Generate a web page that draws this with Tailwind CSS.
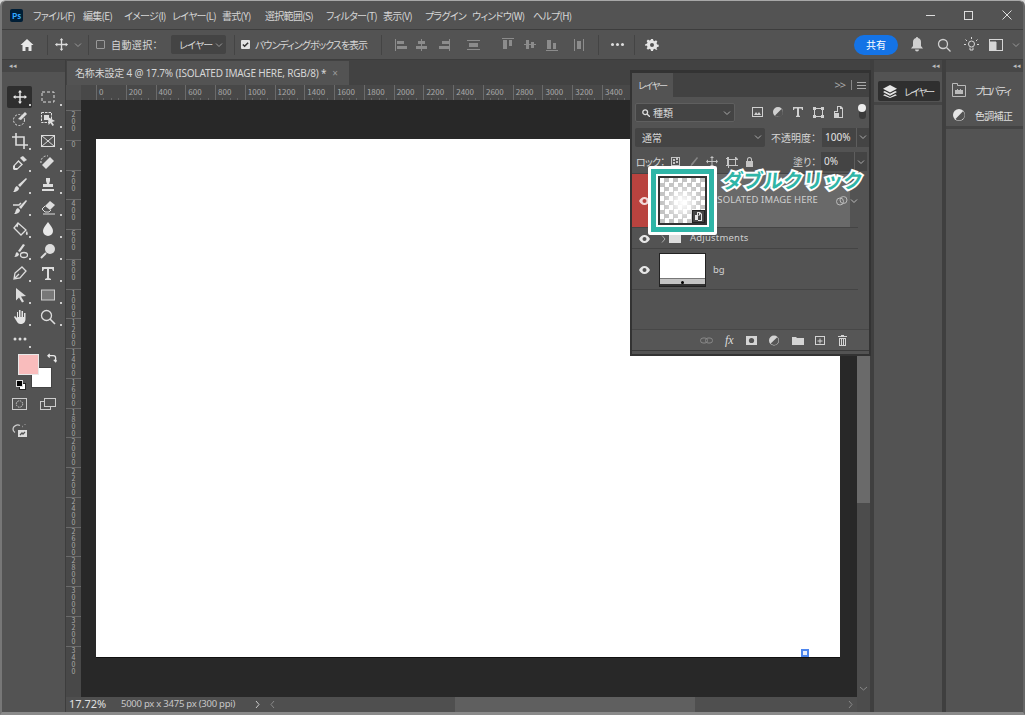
<!DOCTYPE html>
<html lang="ja">
<head>
<meta charset="UTF-8">
<title>Photoshop</title>
<script src="https://cdn.jsdelivr.net/npm/@tailwindcss/browser@4"></script>
</head>
<body class="bg-[#d8d8d8] font-['Noto_Sans_CJK_JP','Noto_Sans',sans-serif] [font-feature-settings:'palt'] whitespace-nowrap text-[#d6d6d6]">
<div class="relative w-[1025px] h-[715px] overflow-hidden rounded-t-[6px] bg-[#535353] border-l-2 border-r-2 border-b-[3px] border-t border-l-[#777] border-r-[#666] border-b-[#8a8a8a] border-t-[#a8a8a8] flex flex-col">

  <!-- title bar -->
  <header class="h-[28px] shrink-0 flex items-center text-[10px]">
    <div class="ml-[8px] w-[13px] h-[13px] rounded-[2px] bg-[#001e36] text-[#31a8ff] text-[8px] leading-[13px] text-center font-bold">Ps</div>
    <nav class="ml-[10px] flex tracking-[-0.7px]">
      <span class="w-[50px]">ファイル(F)</span>
      <span class="w-[41px]">編集(E)</span>
      <span class="w-[48px]">イメージ(I)</span>
      <span class="w-[50px]">レイヤー(L)</span>
      <span class="w-[43px]">書式(Y)</span>
      <span class="w-[61px]">選択範囲(S)</span>
      <span class="w-[57px]">フィルター(T)</span>
      <span class="w-[42px]">表示(V)</span>
      <span class="w-[47px]">プラグイン</span>
      <span class="w-[61px]">ウィンドウ(W)</span>
      <span class="w-[50px]">ヘルプ(H)</span>
    </nav>
    <div class="ml-auto flex items-center mr-[8px]">
      <div class="w-[9px] h-px bg-[#ddd] mr-[29px]"></div>
      <div class="w-[9px] h-[9px] border border-[#ddd] mr-[29px]"></div>
      <svg class="w-[10px] h-[10px] mr-[3px]" viewBox="0 0 10 10" stroke="#ddd" fill="none"><path d="M.5.5l9 9M9.5.5l-9 9"/></svg>
    </div>
  </header>

  <!-- options bar -->
  <div class="h-[31px] shrink-0 flex items-center border-y border-[#3d3d3d] text-[10px]">
    <svg class="ml-[18px] w-[14px] h-[14px]" viewBox="0 0 14 14" fill="#e8e8e8"><path d="M7 1L.5 7H2.500v6h3V9h3v4h3V7h2z"/></svg>
    <div class="ml-[13px] w-px h-[20px] bg-[#444]"></div>
    <svg class="ml-[6px] w-[15px] h-[15px]" viewBox="0 0 16 16" fill="#dcdcdc"><path d="M8 1l2 2.500H8.700v3.800h3.800V6L15 8l-2.500 2V8.700H8.700v3.800H10L8 15l-2-2.500h1.300V8.700H3.500V10L1 8l2.500-2v1.300h3.800V3.500H6z"/></svg>
    <svg class="ml-[5px] w-[8px] h-[8px]" viewBox="0 0 8 8" stroke="#999" fill="none"><path d="M1 2.500l3 3 3-3"/></svg>
    <div class="ml-[6px] w-px h-[20px] bg-[#444]"></div>
    <div class="ml-[7px] w-[9px] h-[9px] border border-[#999] rounded-[1px]"></div>
    <span class="ml-[6px] w-[60px] tracking-[0.4px]">自動選択：</span>
    <div class="w-[55px] h-[19px] bg-[#444] rounded-[2px] flex items-center pl-[8px] tracking-[-0.8px]">レイヤー<svg class="ml-auto mr-[3px] w-[8px] h-[8px]" viewBox="0 0 8 8" stroke="#999" fill="none"><path d="M1 2.500l3 3 3-3"/></svg></div>
    <div class="ml-[8px] w-px h-[20px] bg-[#444]"></div>
    <div class="ml-[6px] w-[9px] h-[9px] bg-[#e2e2e2] rounded-[1px] flex items-center justify-center"><svg class="w-[7px] h-[7px]" viewBox="0 0 8 8" stroke="#333" stroke-width="1.800" fill="none"><path d="M1 4l2 2 4-4"/></svg></div>
    <span class="ml-[5px] w-[126px] tracking-[-1px]">バウンディングボックスを表示</span>
    <div class="w-px h-[20px] bg-[#444]"></div>
    <svg class="ml-[13px] w-[190px] h-[14px]" viewBox="0 0 190 14" fill="#8c8c8c">
      <path d="M0 1h1v12H0zM2 3h7v3H2zM2 8h10v3H2z"/>
      <path d="M26 1h1v12h-1zM23 3h7v3h-7zM21 8h11v3H21z"/>
      <path d="M54 1h1v12h-1zM47 3h7v3h-7zM44 8h10v3H44z"/>
      <path d="M72 2h13v1H72zM72 11h13v1H72zM74 5h9v4h-9z"/>
      <g transform="translate(-6 0)">
        <path d="M113 0h12v1h-12zM114 2h4v9h-4zM120 2h3v6h-3z"/>
        <path d="M135 6h12v1h-12zM137 2h3v9h-3zM142 4h3v6h-3z"/>
        <path d="M157 12h12v1h-12zM158 2h4v9h-4zM164 5h3v6h-3z"/>
        <path d="M185 1h1v12h-1zM194 1h1v12h-1zM188 3h4v8h-4z"/>
      </g>
    </svg>
    <div class="ml-[13px] w-px h-[20px] bg-[#444]"></div>
    <div class="ml-[12px] flex gap-[2px]"><i class="w-[3px] h-[3px] rounded-full bg-[#ddd]"></i><i class="w-[3px] h-[3px] rounded-full bg-[#ddd]"></i><i class="w-[3px] h-[3px] rounded-full bg-[#ddd]"></i></div>
    <div class="ml-[10px] w-px h-[20px] bg-[#444]"></div>
    <svg class="ml-[10px] w-[14px] h-[14px]" viewBox="0 0 14 14" fill="#e4e4e4"><path fill-rule="evenodd" d="M6 1h2l.3 1.600 1.300.6L11 2.300l1.400 1.400-.9 1.400.6 1.300 1.600.3v2l-1.600.3-.6 1.300.9 1.400L11 11.700l-1.400-.9-1.300.6L8 13H6l-.3-1.600-1.300-.6-1.400.9-1.400-1.400.9-1.400-.6-1.300L.3 8V6l1.600-.3.6-1.300-.9-1.400L3 1.600l1.400.9 1.300-.6zM7 5a2 2 0 100 4 2 2 0 000-4z"/></svg>
    <div class="ml-[195px] w-[44px] h-[20px] rounded-full bg-[#1473e6] text-white text-center leading-[19px]">共有</div>
    <svg class="ml-[12px] w-[14px] h-[15px]" viewBox="0 0 14 15" fill="#cfcfcf"><path d="M7 0c.7 0 1 .5 1 1 2 .5 3 2 3 4v4l2 2.500H1L3 9V5c0-2 1-3.500 3-4 0-.5.3-1 1-1zM5 12.500h4a2 2 0 01-4 0z"/></svg>
    <svg class="ml-[13px] w-[14px] h-[14px]" viewBox="0 0 14 14" fill="none" stroke="#cfcfcf" stroke-width="1.300"><circle cx="6" cy="6" r="4.500"/><path d="M9.500 9.500L13.500 13.500"/></svg>
    <svg class="ml-[13px] w-[15px] h-[15px]" viewBox="0 0 15 15" fill="none" stroke="#d6d6d6"><circle cx="7.500" cy="7" r="3"/><path d="M6 10.500v2.500h3v-2.500M7.500 0v2M1.500 2.500L3 4M13.500 2.500L12 4M0 7.500h2M13 7.500h2"/></svg>
    <svg class="ml-[10px] w-[14px] h-[12px]" viewBox="0 0 14 12" fill="none" stroke="#d6d6d6"><rect x=".5" y=".5" width="13" height="11"/><path fill="#d6d6d6" d="M1 3h6v8H1z"/></svg>
    <svg class="ml-[9px] w-[8px] h-[8px]" viewBox="0 0 8 8" stroke="#999" fill="none"><path d="M1 2.500l3 3 3-3"/></svg>
  </div>

  <!-- workspace -->
  <div class="flex-1 min-h-0 flex">
    <!-- tools -->
    <aside class="w-[64px] shrink-0 flex flex-col border-r border-[#3d3d3d]">
      <div class="h-[12px] bg-[#474747] text-[7px] leading-[11px] pl-[7px] text-[#bbb]">◂◂</div>
      <div class="h-[14px]"></div>
      <div id="tools" class="pl-[5px] grid grid-cols-[25px_31px] auto-rows-[22px]"></div>
      <div class="relative h-[42px]">
        <div class="absolute left-[29px] top-[17px] w-[21px] h-[21px] bg-white border border-[#444]"></div>
        <div class="absolute left-[16px] top-[4px] w-[21px] h-[21px] bg-[#f9bcbc] border border-[#e8e8e8]"></div>
        <svg class="absolute left-[45px] top-[3px] w-[10px] h-[10px]" viewBox="0 0 11 11" fill="none" stroke="#e8e8e8" stroke-width="1.400"><path d="M1 3h6a2.500 2.500 0 012.500 2.500V9M3 1L1 3l2 2M7.500 7.500l2 2 1-1.500"/></svg>
        <div class="absolute left-[17px] top-[33px] w-[7px] h-[7px] bg-white border border-[#222]"></div>
        <div class="absolute left-[14px] top-[30px] w-[7px] h-[7px] bg-black border border-[#ddd]"></div>
      </div>
      <div class="pl-[5px] flex h-[24px] items-center">
        <div class="w-[25px] flex justify-center"><svg class="w-[15px] h-[12px]" viewBox="0 0 15 12" fill="none" stroke="#ccc"><rect x=".5" y=".5" width="14" height="11"/><circle cx="7.500" cy="6" r="3.200" stroke-dasharray="1.500 1"/></svg></div>
        <div class="w-[31px] flex justify-center"><svg class="w-[16px] h-[12px]" viewBox="0 0 16 12" fill="none" stroke="#ccc"><rect x=".5" y="3.500" width="10" height="8"/><rect x="4.500" y=".5" width="11" height="8" fill="#535353"/></svg></div>
      </div>
      <div class="pl-[5px] flex h-[28px] items-center">
        <div class="w-[25px] flex justify-center"><svg class="w-[15px] h-[14px]" viewBox="0 0 15 14" fill="none" stroke="#ccc" stroke-width="1.300"><path d="M8 2.500C5 1 1 3 1 6c0 1.500 1 3 2 3.500M13 1v.5M10.500 3.500h.5"/><path fill="#ddd" stroke="none" d="M6 7h9v7H6z"/><path stroke="#535353" d="M8 12l2-2 1 1 2-2"/></svg></div>
      </div>
    </aside>

    <!-- document -->
    <main class="relative flex-1 min-w-0 flex flex-col">
      <div class="h-[25px] shrink-0 bg-[#424242] flex items-end">
        <div class="ml-[1px] w-[282px] h-[24px] bg-[#535353] flex items-center pl-[8px] text-[10px] tracking-[-0.18px] font-['Noto_Sans','Noto_Sans_CJK_JP',sans-serif]">名称未設定 4 @ 17.7% (ISOLATED IMAGE HERE, RGB/8) *<span class="ml-[6px] text-[#999]">×</span></div>
      </div>
      <div class="flex-1 min-h-0 flex">
        <div class="flex-1 min-w-0 flex flex-col">
          <div class="flex-1 min-h-0 flex flex-col">
            <div class="h-[15px] shrink-0 flex bg-[#484848]">
              <div class="w-[15px] shrink-0 bg-[#505050]"></div>
              <div id="rulerH" class="flex-1 min-w-0 flex overflow-hidden ml-[15px] text-[8px] leading-[14px] text-[#a8a8a8] bg-[repeating-linear-gradient(90deg,#666_0_1px,transparent_1px_7.44px)] bg-size-[100%_2px] bg-bottom bg-no-repeat"></div>
            </div>
            <div class="flex-1 min-h-0 flex">
              <div id="rulerV" class="w-[15px] shrink-0 overflow-hidden bg-[#484848] pt-[10px] text-[7px] leading-[7px] text-[#a8a8a8]"></div>
              <div class="relative flex-1 min-w-0 bg-[#282828] pl-[15px] pt-[39px]">
                <div class="relative w-[744px] h-[518px] bg-white shadow-[0_1px_0_#111]">
                  <div class="absolute left-[705px] top-[510px] w-[8px] h-[8px] bg-[#e8eefc] border-2 border-[#4d86ee]"></div>
                </div>
              </div>
            </div>
          </div>
          <!-- status + horizontal scroll -->
          <div class="h-[15px] shrink-0 flex items-center bg-[#4f4f4f]">
            <span class="ml-[3px] w-[52px] shrink-0 text-[11px] text-[#e0e0e0] font-['Noto_Sans',sans-serif]">17.72%</span>
            <span class="w-[133px] shrink-0 text-[9.5px] tracking-[-0.25px] text-[#c8c8c8] font-['Noto_Sans',sans-serif]">5000 px x 3475 px (300 ppi)</span>
            <svg class="w-[7px] h-[9px]" viewBox="0 0 7 9" fill="none" stroke="#ccc"><path d="M2 1l3 3.500-3 3.500"/></svg>
            <svg class="ml-[8px] w-[7px] h-[9px]" viewBox="0 0 7 9" fill="none" stroke="#888"><path d="M5 1L2 4.500 5 8"/></svg>
            <div class="ml-[179px] w-[240px] h-full bg-[#5f5f5f]"></div>
            <svg class="ml-[152px] w-[7px] h-[9px]" viewBox="0 0 7 9" fill="none" stroke="#888"><path d="M2 1l3 3.500-3 3.500"/></svg>
          </div>
        </div>
        <!-- vertical scroll -->
        <div class="w-[13px] shrink-0 flex flex-col bg-[#4c4c4c] pt-[270px] pb-[20px] items-center">
          <div class="w-full h-[148px] bg-[#6a6a6a]"></div>
          <svg class="mt-auto w-[9px] h-[7px]" viewBox="0 0 9 7" fill="none" stroke="#888"><path d="M1 2l3.500 3L8 2"/></svg>
        </div>
      </div>
    </main>

    <!-- docks -->
    <div class="w-[4px] shrink-0 bg-[#3f3f3f]"></div>
    <section class="w-[68px] shrink-0 flex flex-col">
      <div class="h-[12px] bg-[#474747] text-[7px] leading-[11px] text-right pr-[2px] text-[#bbb]">◂◂</div>
      <div class="h-[33px] border-b-[3px] border-[#444] pt-[9px] pl-[4px]">
        <div class="w-[62px] h-[20px] rounded-[2px] bg-[#2f2f2f] flex items-center pl-[5px] text-[10px] tracking-[-1.8px] text-[#ddd]">
          <svg class="w-[14px] h-[13px] mr-[7px]" viewBox="0 0 14 13" fill="#e6e6e6"><path d="M7 0l7 3.700-7 3.700L0 3.700z"/><path d="M1.700 6L7 8.800 12.300 6 14 7 7 10.700 0 7zM1.700 9.300L7 12.100l5.300-2.800L14 10.300 7 13 0 10.300z" /></svg>レイヤー
        </div>
      </div>
    </section>
    <div class="w-[4px] shrink-0 bg-[#3f3f3f]"></div>
    <section class="w-[77px] shrink-0 flex flex-col">
      <div class="h-[12px] bg-[#474747] text-[7px] leading-[11px] text-right pr-[2px] text-[#bbb]">◂◂</div>
      <div class="h-[57px] border-b-[3px] border-[#444] pt-[10px] pl-[6px] text-[10px] text-[#ddd] flex flex-col gap-[9px]">
        <div class="flex items-center h-[16px] tracking-[-2px]"><svg class="w-[14px] h-[14px] mr-[9px]" viewBox="0 0 14 14" fill="none" stroke="#bbb"><path d="M.5 13.500V.5h5v2h8v11z"/><path fill="#bbb" stroke="none" d="M3 11V7h2V6h1v1h2V6h1v1h2v4z"/></svg>プロパティ</div>
        <div class="flex items-center h-[16px] tracking-[-0.7px]"><svg class="w-[14px] h-[14px] mr-[9px]" viewBox="0 0 14 14"><circle cx="7" cy="7" r="6" fill="#e4e4e4"/><path fill="#535353" d="M11 3.200a5 5 0 010 7.600 5 5 0 01-7.500.200z"/></svg>色調補正</div>
      </div>
    </section>

    <!-- floating layers panel -->
    <div class="absolute left-[628px] top-[69px] w-[241px] h-[286px] flex flex-col bg-[#535353] border-2 border-[#333] border-t-[3px] text-[10px]">
      <div class="h-[24px] shrink-0 bg-[#424242] flex items-center">
        <div class="w-[41px] h-full bg-[#535353] flex items-center pl-[6px] text-[9.5px] tracking-[-1.5px]">レイヤー</div>
        <span class="ml-auto text-[#aaa] text-[11px] tracking-[-1px] font-['Noto_Sans',sans-serif]">&gt;&gt;</span>
        <i class="ml-[6px] w-px h-[10px] bg-[#888]"></i>
        <svg class="ml-[5px] mr-[3px] w-[9px] h-[7px]" viewBox="0 0 9 7" fill="#aaa"><path d="M0 0h9v1H0zM0 3h9v1H0zM0 6h9v1H0z"/></svg>
      </div>
      <!-- filter -->
      <div class="mt-[6px] h-[19px] shrink-0 flex items-center pl-[3px]">
        <div class="w-[100px] h-[19px] bg-[#444] border border-[#5f5f5f] rounded-[2px] flex items-center pl-[6px]">
          <svg class="w-[8px] h-[8px] mr-[3px]" viewBox="0 0 8 8" fill="none" stroke="#ddd" stroke-width="1.300"><circle cx="3.200" cy="3.200" r="2.400"/><path d="M5 5l3 3"/></svg>種類
          <svg class="ml-auto mr-[3px] w-[8px] h-[8px]" viewBox="0 0 8 8" stroke="#aaa" fill="none"><path d="M1 2.500l3 3 3-3"/></svg>
        </div>
        <svg class="ml-[15px] w-[96px] h-[13px]" viewBox="0 0 96 13" fill="#d0d0d0">
          <path fill-rule="evenodd" d="M2 1h11v10H2zM3 2v8h9V2z"/><path d="M4 9l2-3 1.500 2L9 6l2 3z"/>
          <path fill-rule="evenodd" d="M28 1a5 5 0 110 10 5 5 0 010-10zm3.500 2L25 9.500a4 4 0 006.500-6.500z"/>
          <path d="M43 1h10v3h-1l-.5-1.500H49V9.500l1 .5v1h-4v-1l1-.5V2.500h-2.500L44 4h-1z"/>
          <path fill-rule="evenodd" d="M63 1h3v1h5V1h3v3h-1v5h1v3h-3v-1h-5v1h-3V9h1V4h-1zm2 3v5h1v1h5V9h1V4h-1V3h-5v1z"/>
          <path fill-rule="evenodd" d="M87 0h4l2 2v10h-9V5h3zm1 1v5h-3v5h7V3h-2V1z"/><path d="M85 7h4v4h-4z"/>
        </svg>
        <div class="relative ml-[13px] w-[7px] h-[12px] bg-[#3a3a3a] rounded-full"><i class="absolute left-[-1px] top-[-3px] w-[8px] h-[8px] rounded-full bg-[#eee]"></i></div>
      </div>
      <!-- blend mode -->
      <div class="mt-[5px] h-[20px] shrink-0 flex items-center pl-[3px]">
        <div class="w-[130px] h-[19px] bg-[#444] rounded-[2px] flex items-center pl-[7px]">通常
          <svg class="ml-auto mr-[3px] w-[8px] h-[8px]" viewBox="0 0 8 8" stroke="#aaa" fill="none"><path d="M1 2.500l3 3 3-3"/></svg>
        </div>
        <span class="ml-[6px] w-[51px]">不透明度：</span>
        <div class="w-[47px] h-[19px] bg-[#444] flex items-center pl-[3px] text-[#e4e4e4] font-['Noto_Sans',sans-serif]">100%
          <span class="ml-auto w-[13px] h-full border-l border-[#5e5e5e] flex items-center justify-center"><svg class="w-[8px] h-[8px]" viewBox="0 0 8 8" stroke="#aaa" fill="none"><path d="M1 2.500l3 3 3-3"/></svg></span>
        </div>
      </div>
      <!-- lock -->
      <div class="mt-[5px] h-[19px] shrink-0 flex items-center pl-[4px]">
        <span class="w-[35px] tracking-[-0.8px]">ロック：</span>
        <svg class="w-[84px] h-[12px]" viewBox="0 0 84 12" fill="#c4c4c4">
          <path fill-rule="evenodd" d="M0 1h9v9H0zM1 2v7h7V2z"/><path d="M2 3h2v2H2zM5 5h2v2H5zM2 6h2v2H2zM5 2h2v2H5z"/>
          <path fill="#888" d="M19 11l1.500-3.500L26 1l1 1-5 6.500z"/>
          <path d="M41 0l2 2h-1.500v3H45V3.500L47 5.500l-2 2V6h-3.500v3H43l-2 2-2-2h1.500V6H37v1.500l-2-2 2-2V5h3.500V2H39z"/>
          <path fill-rule="evenodd" d="M56 1h2v2h6V1h1l2 2v1h-2v5h2v1h-9v2h-1v-2h-2V9h1V3h-1V2h1zm2 3v5h6V4z"/>
          <path fill-rule="evenodd" d="M76 5V3.500a2.500 2.500 0 015 0V5h1v6h-7V5zm1 0h3V3.500a1.500 1.500 0 00-3 0z"/>
        </svg>
        <span class="ml-[38px] w-[28px]">塗り：</span>
        <div class="w-[46px] h-[19px] bg-[#444] flex items-center pl-[3px] text-[#e4e4e4] font-['Noto_Sans',sans-serif]">0%
          <span class="ml-auto w-[13px] h-full border-l border-[#5e5e5e] flex items-center justify-center"><svg class="w-[8px] h-[8px]" viewBox="0 0 8 8" stroke="#aaa" fill="none"><path d="M1 2.500l3 3 3-3"/></svg></span>
        </div>
      </div>
      <!-- layer list -->
      <div class="mt-[2px] flex-1 min-h-0 w-[226px] text-[9.5px] font-['Noto_Sans',sans-serif] text-[#d0d0d0]">
        <div class="h-[55px] flex border-y border-[#444]">
          <div class="w-[24px] bg-[#b9433f] flex items-center justify-center"><svg class="w-[11px] h-[8px]" viewBox="0 0 11 8" fill="#f1d9d8"><path fill-rule="evenodd" d="M5.500 0C8 0 10 2 11 4 10 6 8 8 5.500 8S1 6 0 4c1-2 3-4 5.500-4zm0 2a2 2 0 100 4 2 2 0 000-4z"/></svg></div>
          <div class="w-[194px] bg-[#696969] flex items-center pl-[58px] tracking-[0.1px]">ISOLATED IMAGE HERE</div>
          <div class="flex-1 flex items-center -ml-[14px]">
            <svg class="w-[12px] h-[10px] shrink-0" viewBox="0 0 12 10" fill="none" stroke="#bbb"><circle cx="4" cy="5.500" r="3.500"/><circle cx="7.500" cy="4" r="3.500"/></svg>
            <svg class="ml-[2px] w-[8px] h-[8px] shrink-0" viewBox="0 0 8 8" stroke="#bbb" fill="none"><path d="M1 2.500l3 3 3-3"/></svg>
          </div>
        </div>
        <div class="h-[21px] pt-[1px] flex items-center border-b border-[#444]">
          <div class="w-[24px] flex justify-center"><svg class="w-[11px] h-[8px]" viewBox="0 0 11 8" fill="#e6e6e6"><path fill-rule="evenodd" d="M5.500 0C8 0 10 2 11 4 10 6 8 8 5.500 8S1 6 0 4c1-2 3-4 5.500-4zm0 2a2 2 0 100 4 2 2 0 000-4z"/></svg></div>
          <svg class="ml-[5px] w-[5px] h-[8px]" viewBox="0 0 5 8" fill="none" stroke="#aaa"><path d="M1 .5L4 4 1 7.500"/></svg>
          <div class="ml-[3px] w-[12px] h-[9px] bg-[#ddd]"></div>
          <span class="ml-[9px] tracking-[0.2px]">Adjustments</span>
        </div>
        <div class="h-[41px] pt-[2px] flex items-center border-b border-[#444]">
          <div class="w-[24px] flex justify-center"><svg class="w-[11px] h-[8px]" viewBox="0 0 11 8" fill="#e6e6e6"><path fill-rule="evenodd" d="M5.500 0C8 0 10 2 11 4 10 6 8 8 5.500 8S1 6 0 4c1-2 3-4 5.500-4zm0 2a2 2 0 100 4 2 2 0 000-4z"/></svg></div>
          <div class="ml-[3px] w-[47px] h-[34px] border border-[#222] bg-white flex flex-col justify-end">
            <div class="relative h-[8px] bg-[#c4c4c4] border-t border-[#777] border-b-2 border-b-[#333]"><i class="absolute left-[21px] bottom-0 w-[3px] h-[3px] bg-black rounded-full"></i></div>
          </div>
          <span class="ml-[7px]">bg</span>
        </div>
      </div>
      <!-- bottom buttons -->
      <div class="h-[21px] shrink-0 border-t border-[#474747] bg-[#565656] flex items-center">
        <svg class="ml-[68px] w-[148px] h-[13px]" viewBox="0 0 148 13" fill="#d4d4d4">
          <g fill="none" stroke="#888"><rect x=".5" y="4" width="7" height="5" rx="2.500"/><rect x="5.500" y="4" width="7" height="5" rx="2.500"/></g>
          <rect x="46" y="2" width="11" height="9" /><circle cx="51.500" cy="6.500" r="2.600" fill="#535353"/>
          <path fill-rule="evenodd" d="M74 1.500a5 5 0 110 10 5 5 0 010-10zm3.200 1.700l-6.500 6.400a4 4 0 006.500-6.400z"/>
          <path d="M92 3h4l1 1h7v7H92z"/>
          <path fill-rule="evenodd" d="M115 2h10v9h-10zm1 1v7h8V3zm3.500 1.500h1v2h2v1h-2v2h-1v-2h-2v-1h2z"/>
          <path fill-rule="evenodd" d="M141 1h3v1h3v1h-9V2h3zM139 4h7v8h-7zm1 1v6h1V5zm2 0v6h1V5zm2 0v6h1V5z" />
        </svg>
      </div>
      <span class="absolute left-[93px] top-[258px] text-[12px] italic font-['Liberation_Serif',serif] text-[#ddd]">fx</span>
      <div class="h-[4px] shrink-0 border-t border-[#3a3a3a]"></div>

      <!-- annotation frame over the layer thumbnail -->
      <div class="absolute left-[16px] top-[93px] w-[69px] h-[69px] bg-[#2fb5a7] border-[3px] border-white rounded-[2px] p-[5px]">
        <div class="w-full h-full bg-white p-[2px]">
          <div class="relative w-full h-full border-2 border-[#333] bg-[repeating-conic-gradient(#c4c4c4_0_25%,#fff_0_50%)] bg-size-[9px_9px]">
            <div class="absolute inset-0 bg-[radial-gradient(circle_at_50%_55%,#fff_0,#ffffffb0_20%,#ffffff40_42%,#ffffff00_62%)]"></div>
            <div class="absolute right-0 bottom-0 w-[13px] h-[13px] bg-[#444] border border-[#222] flex items-center justify-center">
              <svg class="w-[9px] h-[9px]" viewBox="0 0 9 9" fill="#e4e4e4"><path fill-rule="evenodd" d="M3 0h3l2 2v7H4V8H1V3h2zm1 1v2h1V1zm2 1v1.500H4V8h3V2.500z"/></svg>
            </div>
          </div>
        </div>
      </div>
      <span class="absolute left-[91px] top-[93px] text-[20px] leading-[28px] font-bold -skew-x-6 text-[#2fb5a7] [font-feature-settings:normal] font-['Noto_Sans_CJK_JP',sans-serif] [-webkit-text-stroke:4px_white] [paint-order:stroke_fill]">ダブルクリック</span>
    </div>
  </div>
</div>

<script>
  // tool icons, two per row, drawn in a 16x16 box
  const S = 'stroke="#ddd" fill="none"';
  const tools = [
    ['<path fill="#e8e8e8" d="M8 1l2 2.500H8.700v3.800h3.800V6L15 8l-2.500 2V8.700H8.700v3.800H10L8 15l-2-2.500h1.300V8.700H3.500V10L1 8l2.500-2v1.300h3.800V3.500H6z"/>',
     `<rect x="2" y="3" width="12" height="10" ${S} stroke-dasharray="3 2"/>`],
    [`<circle cx="7" cy="9" r="5.500" ${S} stroke-dasharray="2 1.500"/><path fill="#ddd" d="M13 1l2 2-6 6-3-1z"/>`,
     `<rect x="1.500" y="1.500" width="10" height="10" ${S} stroke-dasharray="2.500 1"/><rect x="4" y="4" width="5" height="5" fill="#ddd"/><path fill="#ddd" d="M8 6l7 4-3 1 2 3-1.500 1-2-3-2 2z"/>`],
    [`<path ${S} stroke-width="1.600" d="M4 0v12h12M0 4h12v12"/>`,
     `<rect x="1.500" y="2.500" width="13" height="11" ${S}/><path ${S} d="M1.500 2.500l13 11M14.500 2.500l-13 11"/>`],
    ['<path fill="#ddd" d="M11 1l4 4-2 1-1 1-4-4 1-1zM6.500 5l4.500 4.500-6 5.500H2l-1-1v-3zM6.500 7L3 10.500V13h2.500L9 9.500z"/>',
     `<path fill="#ddd" d="M10 2l4 4-8 8-4-4z"/><path ${S} stroke-dasharray="2 1.500" d="M1 8a6 6 0 017-7"/>`],
    ['<path fill="#ddd" d="M14 1l1 1-7 8-2-2zM5 9l2 2c0 2-2 4-6 4 2-1 1-5 4-6z"/>',
     '<path fill="#ddd" d="M6 1h4v3l-1 3h4v3H3V7h4L6 4zM2 12h12v2H2z"/>'],
    [`<path fill="#ddd" d="M14 1l1 1-6 8-2-2zM6 9l2 2c0 2-2 4-6 4 2-1 1-5 4-6z"/><path ${S} stroke-width="1.500" d="M1 6h6l2-2"/>`,
     `<path fill="#ddd" d="M10 2l5 4-5 5-5-4z"/><path ${S} d="M5 7l-3 3 3 3h4l2-2M3 15h12"/>`],
    [`<path ${S} stroke-width="1.300" d="M6 2l8 7-5 5-7-7zM6 2L5 6"/><path fill="#ddd" d="M15 10c1 2 1 4 0 4s-2-2 0-4z"/>`,
     '<path fill="#e8e8e8" d="M8 1c3 4 5 6 5 9a5 5 0 01-10 0c0-3 2-5 5-9z"/>'],
    [`<path fill="#ddd" d="M11 1l2 1-5 7-2-1zM5 9l2 2c0 2-2 3-5 3 2-1 1-4 3-5z"/><ellipse cx="12" cy="12" rx="3.500" ry="2.500" ${S} stroke-width="1.300"/>`,
     '<circle cx="10" cy="6" r="5" fill="#ddd"/><path stroke="#ddd" stroke-width="2" d="M6 10l-5 5"/>'],
    [`<path ${S} stroke-width="1.300" d="M10 2l4 4-6 7-6 1 1-6zM3 13l4-4"/>`,
     '<path fill="#ddd" d="M2 2h12v4h-1l-1-2H9v9l2 1v1H5v-1l2-1V4H4L3 6H2z"/>'],
    ['<path fill="#ddd" d="M4 1l10 8-5 .5 3 5-2 1-3-5-3 3z"/>',
     '<rect x="1.500" y="3" width="13" height="10" fill="#777" stroke="#ccc"/>'],
    ['<path fill="#e4e4e4" d="M5 3h1v5h1V1h1.500v7h1V2H11v6h1V4h1.500v6c0 3-2 5-5 5-2 0-3-1-4-3L2 8l1-1 2 2z"/>',
     `<circle cx="6.500" cy="6.500" r="5" ${S} stroke-width="1.300"/><path ${S} stroke-width="1.600" d="M10 10l5 5"/>`],
    ['<circle cx="3" cy="8" r="1.500" fill="#ddd"/><circle cx="8" cy="8" r="1.500" fill="#ddd"/><circle cx="13" cy="8" r="1.500" fill="#ddd"/>', '']
  ];
  // tools with a flyout get the small corner mark
  document.getElementById('tools').innerHTML = tools.flat().map((icon, i) => icon === '' ? '<div></div>' : `
    <div class="relative flex items-center justify-center ${i === 0 ? 'bg-[#2e2e2e] rounded-[2px]' : ''}">
      <svg class="w-[16px] h-[16px]" viewBox="0 0 16 16">${icon}</svg>
      <i class="absolute right-[1px] bottom-[2px] w-[2px] h-[2px] bg-[#ccc]"></i>
    </div>`).join('');

  let h = '';
  for (let v = 0; v <= 3400; v += 200) {
    h += `<div class="w-[29.77px] shrink-0 border-l border-[#6a6a6a] pl-[2px]">${v}</div>`;
  }
  document.getElementById('rulerH').innerHTML = h;

  // vertical ruler: one digit per line, -200 first
  let r = '';
  [200, 0, 200, 400, 600, 800, 1000, 1200, 1400, 1600, 1800, 2000, 2200, 2400, 2600, 2800, 3000, 3200, 3400].forEach(v => {
    const digits = String(v).split('').map(d => `<div class="text-center">${d}</div>`).join('');
    r += `<div class="h-[29.77px] overflow-hidden border-t border-[#6a6a6a]">${digits}</div>`;
  });
  document.getElementById('rulerV').innerHTML = r;
</script>
</body>
</html>
